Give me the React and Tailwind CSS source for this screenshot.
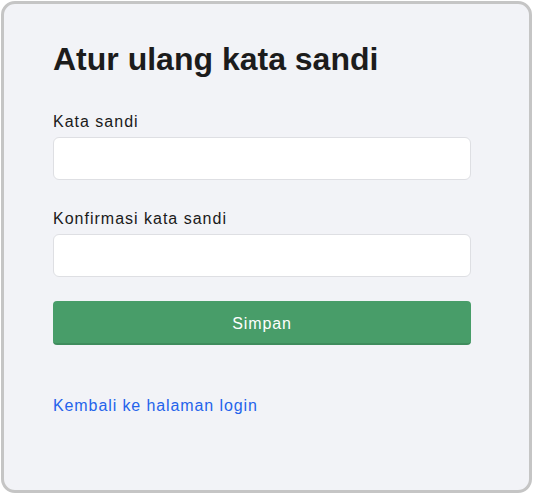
export default function App() {
  return (
    <div className="w-[533px] h-[495px] bg-white p-[1px] pb-[2px] font-['Liberation_Sans',Arial,sans-serif]">
      <div className="h-full rounded-[14px] border-[3px] border-[#c5c5c5] bg-[#f2f3f7] px-[49px] pt-[36px]">
        <h1 className="text-[32px] leading-[38px] font-bold text-[#1c1c1c]">Atur ulang kata sandi</h1>
        <form className="mt-[34px] flex flex-col" onSubmit={e => e.preventDefault()}>
          <label className="text-[16px] leading-[20px] tracking-[1px] text-[#1a1a1a]">Kata sandi</label>
          <input type="password" className="mt-[5px] h-[43px] w-[418px] rounded-[6px] border border-[#dedfe3] bg-white px-3 outline-none" />
          <label className="mt-[29px] text-[16px] leading-[20px] tracking-[1px] text-[#1a1a1a]">Konfirmasi kata sandi</label>
          <input type="password" className="mt-[5px] h-[43px] w-[418px] rounded-[6px] border border-[#dedfe3] bg-white px-3 outline-none" />
          <button type="submit" className="mt-[24px] h-[44px] w-[418px] rounded-[4px] border-b-2 border-[#3f8c5d] bg-[#489d69] pt-[3px] text-[16px] tracking-[0.9px] text-white">
            Simpan
          </button>
        </form>
        <a href="#" className="mt-[51px] block text-[16px] leading-[20px] tracking-[0.9px] text-[#2463eb]">Kembali ke halaman login</a>
      </div>
    </div>
  );
}
